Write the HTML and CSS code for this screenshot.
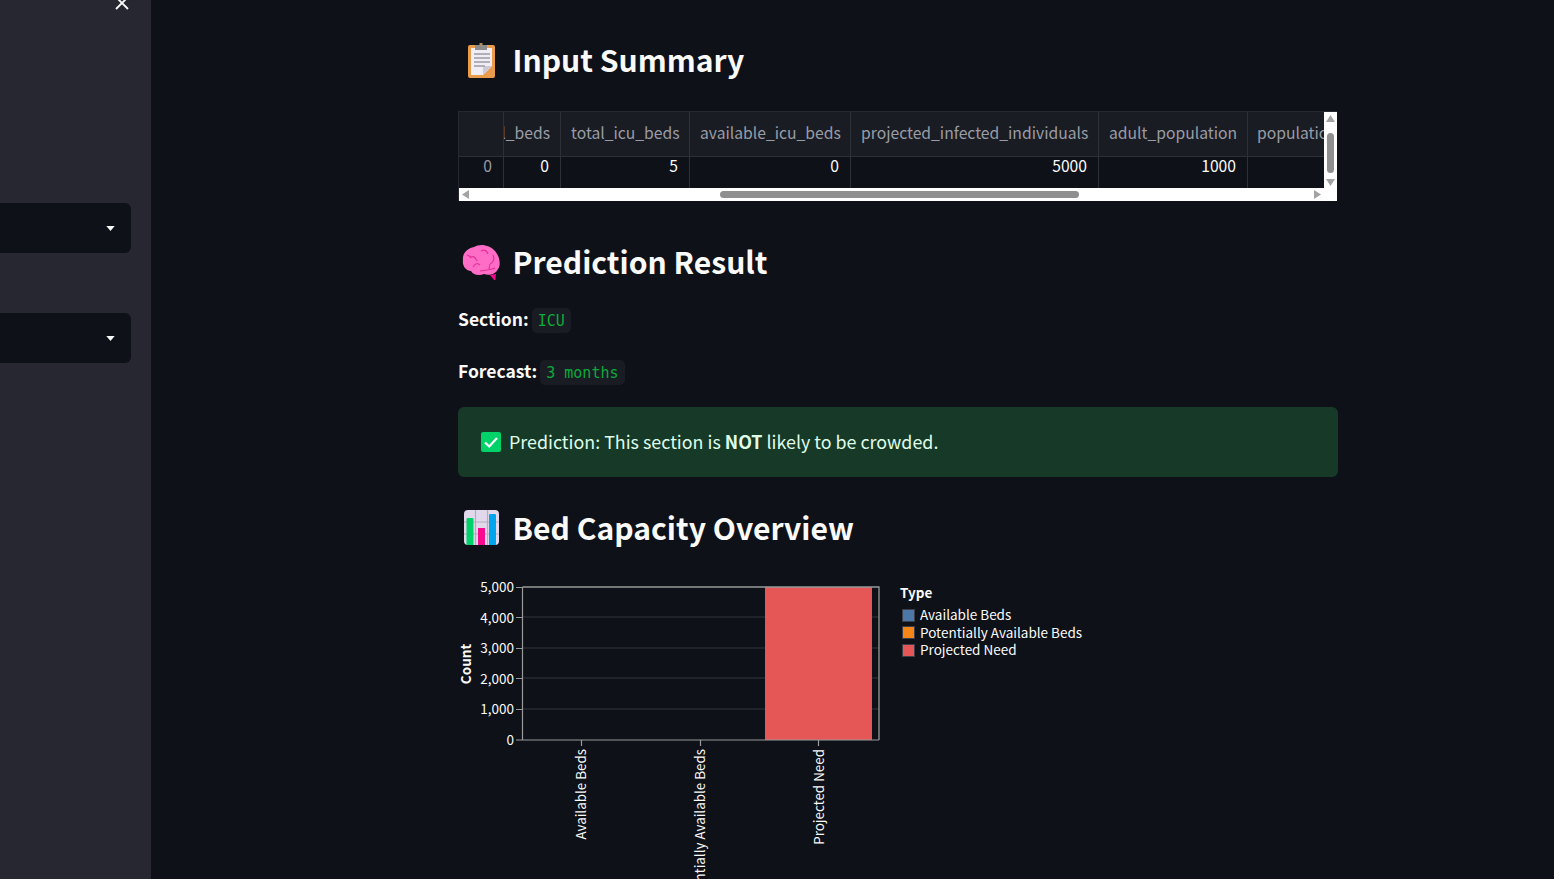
FILE: index.html
```html
<!DOCTYPE html>
<html lang="en">
<head>
<meta charset="utf-8">
<title>Bed Capacity Prediction</title>
<link rel="stylesheet" href="styles.css">
</head>
<body>
<div class="app">
  <aside class="sidebar">
    <div class="side-head">
      <svg class="close" viewBox="0 0 14 14" width="14" height="14"><path d="M1 1L13 13M13 1L1 13" stroke="#fafafa" stroke-width="1.8" fill="none"/></svg>
    </div>
    <div class="select"><svg viewBox="0 0 10 6" width="9" height="5"><path d="M0 0H10L5 6Z" fill="#fafafa"/></svg></div>
    <div class="select"><svg viewBox="0 0 10 6" width="9" height="5"><path d="M0 0H10L5 6Z" fill="#fafafa"/></svg></div>
  </aside>
  <main class="main">
    <div class="block">
      <h2 class="title title-first">
        <svg class="emoji" viewBox="0 0 42 40" width="42" height="40">
          <rect x="10" y="4" width="27" height="33" rx="2" fill="#e89c4c"/>
          <rect x="13" y="7" width="21" height="27" fill="#f1edf7"/>
          <path d="M34 25V34H25Z" fill="#e89c4c"/>
          <path d="M25 34L34 25H27Q25 25 25 27Z" fill="#cfc9d6"/>
          <rect x="17" y="4" width="12" height="5" fill="#8c8c8c"/>
          <rect x="21.500" y="2" width="3" height="3" fill="#a8905f"/>
          <path d="M16 13H32M16 17H32M16 21H32M16 25H27" stroke="#9d9aa3" stroke-width="1.300"/>
        </svg>
        <span>Input Summary</span>
      </h2>
      <div class="df">
        <div class="df-view">
          <div class="df-row df-head">
            <div class="cell c-index"></div>
            <div class="cell c-a clip-left"><span>total_beds</span></div>
            <div class="cell c-b">total_icu_beds</div>
            <div class="cell c-c">available_icu_beds</div>
            <div class="cell c-d">projected_infected_individuals</div>
            <div class="cell c-e">adult_population</div>
            <div class="cell c-f">population_over_65</div>
          </div>
          <div class="df-row df-body">
            <div class="cell c-index idx">0</div>
            <div class="cell c-a">0</div>
            <div class="cell c-b">5</div>
            <div class="cell c-c">0</div>
            <div class="cell c-d">5000</div>
            <div class="cell c-e">1000</div>
            <div class="cell c-f"></div>
          </div>
        </div>
        <div class="vbar">
          <svg viewBox="0 0 9 7" width="9" height="7"><path d="M0 7H9L4.500 0Z" fill="#a3a3a3"/></svg>
          <div class="vthumb"></div>
          <svg viewBox="0 0 9 7" width="9" height="7"><path d="M0 0H9L4.500 7Z" fill="#a3a3a3"/></svg>
        </div>
        <div class="hbar">
          <svg viewBox="0 0 7 9" width="7" height="9"><path d="M7 0V9L0 4.500Z" fill="#a3a3a3"/></svg>
          <div class="htrack"><div class="hthumb"></div></div>
          <svg viewBox="0 0 7 9" width="7" height="9"><path d="M0 0V9L7 4.500Z" fill="#a3a3a3"/></svg>
        </div>
      </div>

      <h2 class="title title-second">
        <svg class="emoji" viewBox="0 0 42 40" width="42" height="40">
          <path d="M32 35l5 6 1-7Z" fill="#f70a8d"/>
          <path d="M5 20C4 13 10 8 16 7 22 3 32 5 37 11 42 17 43 25 40 29 38 34 31 36 26 34 21 36 15 35 13 31 8 31 4 26 5 20Z" fill="#ff6dc6"/>
          <path d="M12 18C15 15 17 17 19 21M15 27C17 23 20 23 22 25M23 11C27 9 29 11 30 14M35 15C37 19 35 23 32 24M22 31C27 30 33 30 37 28M31 29L32 24M9 15L13 17" stroke="#e5329a" stroke-width="1.200" fill="none"/>
        </svg>
        <span>Prediction Result</span>
      </h2>
      <p class="meta"><strong>Section:</strong> <code>ICU</code></p>
      <p class="meta"><strong>Forecast:</strong> <code>3 months</code></p>
      <div class="alert">
        <svg class="check" viewBox="0 0 20 20" width="20" height="20"><rect width="20" height="20" rx="2" fill="#00d26a"/><path d="M4 10.500L8.200 14.500 16 6" stroke="#fff" stroke-width="2.200" fill="none"/></svg>
        <span>Prediction: This section is <strong>NOT</strong> likely to be crowded.</span>
      </div>
      <h2 class="title title-third">
        <svg class="emoji" viewBox="0 0 42 40" width="42" height="40">
          <rect x="6" y="4" width="35" height="35" rx="4" fill="#e1d8ec"/>
          <path d="M6 16H41M6 28H41M17.500 4V39M29.500 4V39" stroke="#b4acbd" stroke-width="1.200"/>
          <path d="M8.500 39V13Q8.500 12 10 12H14Q15.500 12 15.500 13V39Z" fill="#00d26a"/>
          <rect x="20" y="22" width="7" height="17" fill="#f70a8d"/>
          <path d="M31 39V9Q31 8 32.500 8H36.500Q38 8 38 9V39Z" fill="#00a6ed"/>
        </svg>
        <span>Bed Capacity Overview</span>
      </h2>
      <div class="chart">
        <svg class="vega" viewBox="0 0 640 300" width="640" height="300">
          <g class="grid">
            <path d="M64 37H421M64 68H421M64 98H421M64 129H421"/>
          </g>
          <rect class="bar" x="307" y="7" width="107" height="153"/>
          <path class="frame" d="M64.500 7H421V160"/>
          <path class="axis" d="M64.500 7V160M58 160H421M58 7.500H64M58 37.500H64M58 68.500H64M58 98.500H64M58 129.500H64M123.500 160V166M242.500 160V166M360.500 160V166"/>
          <g class="ylabels">
            <text x="56" y="12">5,000</text>
            <text x="56" y="43">4,000</text>
            <text x="56" y="73">3,000</text>
            <text x="56" y="104">2,000</text>
            <text x="56" y="134">1,000</text>
            <text x="56" y="165">0</text>
          </g>
          <text class="ytitle" transform="translate(13 84) rotate(-90)">Count</text>
          <g class="xlabels">
            <text transform="translate(128 169) rotate(-90)">Available Beds</text>
            <text transform="translate(247 169) rotate(-90)">Potentially Available Beds</text>
            <text transform="translate(366 169) rotate(-90)">Projected Need</text>
          </g>
          <text class="ltitle" x="442" y="18">Type</text>
          <rect x="444.500" y="29.500" width="12" height="12" fill="#4c78a8" stroke="#3c3f4a"/>
          <rect x="444.500" y="46.500" width="12" height="12" fill="#f58518" stroke="#3c3f4a"/>
          <rect x="444.500" y="64.500" width="12" height="12" fill="#e45756" stroke="#3c3f4a"/>
          <g class="llabels">
            <text x="462" y="40">Available Beds</text>
            <text x="462" y="58">Potentially Available Beds</text>
            <text x="462" y="75">Projected Need</text>
          </g>
        </svg>
      </div>
    </div>
  </main>
</div>
</body>
</html>
```
FILE: styles.css
```css
* { box-sizing: border-box; }
html, body { margin: 0; height: 100%; overflow: hidden; background: #0e1117; }
body { font-family: "Noto Sans CJK SC", "Source Sans Pro", "Open Sans", sans-serif; color: #fafafa; }
.app { display: flex; height: 879px; overflow: hidden; }

.sidebar { width: 151px; flex: none; background: #262730; padding-right: 20px; display: flex; flex-direction: column; gap: 60px; }
.side-head { height: 143px; display: flex; justify-content: flex-end; align-items: flex-start; padding-right: 2px; }
.close { margin-top: -4px; }
.select { height: 50px; background: #0e1117; border-radius: 0 6px 6px 0; display: flex; justify-content: flex-end; align-items: center; padding-right: 16px; }

.main { flex: 1; min-width: 0; padding-left: 307px; }
.block { width: 880px; }

.title { margin: 0; display: flex; align-items: center; height: 40px; font-size: 30.100px; line-height: 40px; font-weight: 600; color: #fafafa; }
.title-first span { margin-top: -5px; }
.title-second span { margin-top: 1px; }
.title-third span { margin-top: 2px; }
.emoji { flex: none; margin-right: 12.500px; }
.title-first { margin-top: 41px; }
.title-second { margin-top: 39px; }
.title-third { margin-top: 29px; }

.df { margin-top: 30px; width: 879px; height: 90px; display: grid; grid-template-columns: 865px 13px; grid-template-rows: 76px 13px; background: #fff; border: 1px solid #262730; border-width: 1px 0 0 1px; }
.df-view { overflow: hidden; background: #0e1117; }
.df-row { display: flex; width: 1100px; }
.df-head { height: 45px; background: #1a1c24; color: #999ca6; border-bottom: 1px solid #2e3038; }
.df-body { height: 31px; color: #fafafa; }
.cell { font-size: 15.700px; line-height: 20px; padding: 0 10px; border-right: 1px solid #2e3038; flex: none; white-space: nowrap; overflow: hidden; }
.df-head .cell { line-height: 42px; text-align: right; }
.df-body .cell { text-align: right; line-height: 17px; padding-right: 11px; }
.c-index { width: 45px; }
.df-body .idx { color: #999ca6; }
.c-a { width: 57px; }
.c-b { width: 129px; }
.c-c { width: 161px; }
.c-d { width: 248px; }
.c-e { width: 149px; }
.c-f { width: 200px; border-right: none; }
.df-head .c-f { text-align: left; padding-left: 9px; }
.df-head .c-d, .df-head .c-e { padding-right: 11px; }
.df-head .clip-left { display: flex; justify-content: flex-end; padding: 0 10px 0 0; }
.clip-left span { flex: none; }

.vbar { grid-column: 2; grid-row: 1 / span 2; display: flex; flex-direction: column; align-items: center; padding-top: 3px; background: #fff; }
.vthumb { width: 7px; height: 40px; margin: 11px 0 6px; background: #8f8f8f; border-radius: 4px; }
.hbar { grid-column: 1; grid-row: 2; display: flex; align-items: center; padding: 0 3px; background: #fff; }
.htrack { flex: 1; height: 7px; }
.hthumb { margin-left: 251px; width: 359px; height: 7px; background: #8f8f8f; border-radius: 4px; }

.meta { margin: 0; font-size: 17.500px; line-height: 32px; height: 32px; display: flex; align-items: center; gap: 3px; }
.title + .meta { margin-top: 23px; }
.meta + .meta { margin-top: 20px; }
.meta strong { font-weight: 600; }
code { font-family: "DejaVu Sans Mono", monospace; font-size: 15px; line-height: 27px; height: 25px; background: #1a1c24; color: #09ab3b; padding: 0 6px; border-radius: 5px; margin-top: 2px; }

.alert { margin-top: 20px; height: 70px; background: #173928; border-radius: 6px; padding: 0 23px; display: flex; align-items: center; gap: 8px; color: #dffde9; font-size: 17.880px; line-height: 28px; }
.alert span { margin-top: -2px; }
.alert strong { font-weight: 600; }
.check { flex: none; }

.chart { margin-top: 34px; height: 332px; }
.vega { display: block; font-family: "Noto Sans CJK SC", sans-serif; overflow: hidden; }
.vega text { fill: #fafafa; }
.grid path { stroke: #35373e; stroke-width: 1.200; fill: none; }
.bar { fill: #e45756; }
.frame { stroke: #999; stroke-width: 1.300; fill: none; }
.axis { stroke: #999; stroke-width: 1.200; fill: none; }
.ylabels text { font-size: 13.500px; text-anchor: end; }
.ytitle { font-size: 13.500px; font-weight: 600; text-anchor: middle; }
.xlabels text { font-size: 13.400px; text-anchor: end; }
.ltitle { font-size: 13.500px; font-weight: 600; }
.llabels text { font-size: 13.500px; }
```
